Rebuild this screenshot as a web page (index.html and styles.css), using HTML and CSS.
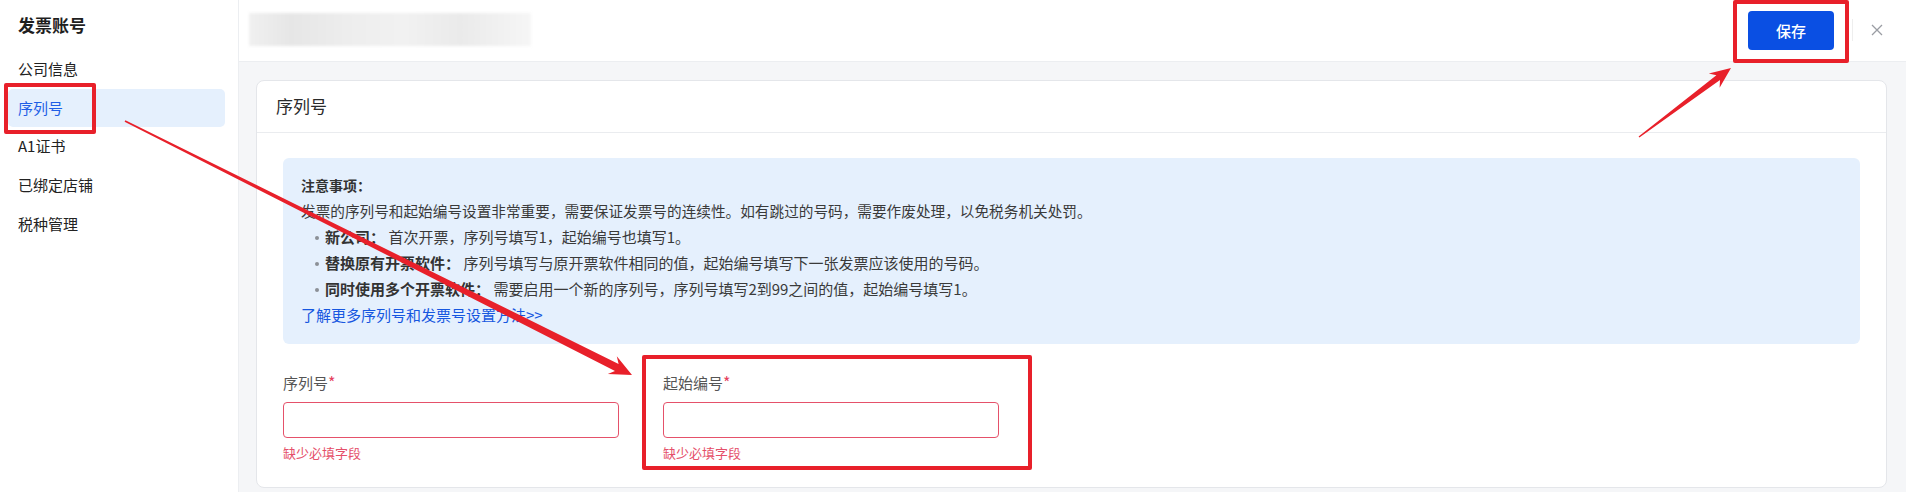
FILE: index.html
```html
<!DOCTYPE html>
<html lang="zh-CN">
<head>
<meta charset="utf-8">
<title>发票账号 - 序列号</title>
<link rel="stylesheet" href="styles.css">
</head>
<body>
<div class="page">
  <aside class="sidebar">
    <div class="side-title">发票账号</div>
    <nav class="side-nav">
      <div class="side-item">公司信息</div>
      <div class="side-item active">序列号</div>
      <div class="side-item">A1证书</div>
      <div class="side-item">已绑定店铺</div>
      <div class="side-item">税种管理</div>
    </nav>
  </aside>
  <main class="main">
    <header class="topbar">
      <div class="blurred"></div>
      <div class="topbar-spacer"></div>
      <button class="btn-save">保存</button>
      <span class="topbar-sep"></span>
      <span class="close">
        <svg width="12" height="12" viewBox="0 0 12 12"><path d="M1 1L11 11M11 1L1 11" stroke="#9a9da3" stroke-width="1.3" fill="none"/></svg>
      </span>
    </header>
    <section class="content">
      <div class="card">
        <div class="card-head">序列号</div>
        <div class="card-body">
          <div class="notice">
            <div class="notice-title">注意事项：</div>
            <div class="notice-line">发票的序列号和起始编号设置非常重要，需要保证发票号的连续性。如有跳过的号码，需要作废处理，以免税务机关处罚。</div>
            <ul class="notice-list">
              <li><span class="dot"></span><b>新公司：</b> 首次开票，序列号填写1，起始编号也填写1。</li>
              <li><span class="dot"></span><b>替换原有开票软件：</b> 序列号填写与原开票软件相同的值，起始编号填写下一张发票应该使用的号码。</li>
              <li><span class="dot"></span><b>同时使用多个开票软件：</b> 需要启用一个新的序列号，序列号填写2到99之间的值，起始编号填写1。</li>
            </ul>
            <a class="notice-link">了解更多序列号和发票号设置方法&gt;&gt;</a>
          </div>
          <div class="form-row">
            <div class="field">
              <label class="field-label">序列号<span class="req">*</span></label>
              <div class="field-input"></div>
              <div class="field-error">缺少必填字段</div>
            </div>
            <div class="field">
              <label class="field-label">起始编号<span class="req">*</span></label>
              <div class="field-input"></div>
              <div class="field-error">缺少必填字段</div>
            </div>
          </div>
        </div>
      </div>
    </section>
  </main>
  <div class="mark mark-side"></div>
  <div class="mark mark-field"></div>
  <div class="mark mark-save"></div>
  <svg class="arrows" width="1906" height="492" viewBox="0 0 1906 492">
    <polygon fill="#e8202a" points="124.6,121.7 615.0,370.9 607.8,374.0 632,375 616.8,356.2 618.6,363.9 125.4,120.3"/>
    <polygon fill="#e8202a" points="1639.4,137.6 1720,80 1719.6,87.8 1731,68 1708.8,73.4 1716.4,75.2 1638.6,136.4"/>
  </svg>
</div>
</body>
</html>
```
FILE: styles.css
```css
* { box-sizing: border-box; }
html, body { margin: 0; padding: 0; }
body {
  width: 1906px;
  height: 492px;
  overflow: hidden;
  font-family: "Noto Sans CJK SC", "Noto Sans", sans-serif;
  color: #333;
  background: #fff;
}
.page {
  position: relative;
  display: flex;
  width: 1906px;
  height: 492px;
}
.sidebar {
  width: 239px;
  flex: none;
  border-right: 1px solid #eceef1;
  background: #fff;
}
.side-title {
  height: 50px;
  line-height: 50px;
  padding-left: 18px;
  font-size: 17px;
  font-weight: 700;
  color: #1f1f1f;
}
.side-nav {
  display: flex;
  flex-direction: column;
}
.side-item {
  height: 38.7px;
  line-height: 38.7px;
  margin: 0 13px 0 8px;
  padding-left: 10px;
  font-size: 15px;
  color: #222;
  border-radius: 5px;
}
.side-item.active {
  background: #e5f0fd;
  color: #1f5fe6;
}
.main {
  flex: 1;
  display: flex;
  flex-direction: column;
  min-width: 0;
  background: #f5f6f8;
}
.topbar {
  height: 62px;
  flex: none;
  display: flex;
  align-items: center;
  padding: 0 23px 0 10px;
  background: #fff;
  border-bottom: 1px solid #eceef1;
}
.blurred {
  width: 282px;
  height: 33px;
  margin-top: -2px;
  background: linear-gradient(90deg, #f0f0f0 0%, #e6e6e6 15%, #ededed 35%, #f1f1f1 55%, #eaeaea 75%, #f6f6f6 100%);
  filter: blur(1.5px);
}
.topbar-spacer { flex: 1; }
.btn-save {
  width: 86px;
  height: 39px;
  margin-top: -1px;
  border: none;
  border-radius: 4px;
  background: #0a4fe3;
  color: #fff;
  font-family: inherit;
  font-size: 15px;
  font-weight: 500;
  padding: 0;
}
.topbar-sep {
  width: 1px;
  height: 22px;
  margin-left: 18px;
  margin-top: -2px;
  background: #eeeeee;
}
.close {
  display: flex;
  margin-left: 18px;
  margin-top: -2px;
}
.content {
  flex: 1;
  padding: 18px 19px 0 17px;
  min-height: 0;
}
.card {
  background: #fff;
  border: 1px solid #e4e6ea;
  border-radius: 8px;
}
.card-head {
  height: 52px;
  line-height: 50px;
  padding-left: 19px;
  font-size: 17px;
  color: #2a2a2a;
  border-bottom: 1px solid #eaecef;
}
.card-body {
  padding: 25px 26px 24px 26px;
}
.notice {
  background: #e5f0fd;
  border-radius: 6px;
  padding: 14px 19px 16px 18px;
  color: #3a3a3a;
  font-size: 15px;
  line-height: 26px;
}
.notice-title {
  font-size: 14px;
  font-weight: 700;
  color: #333;
}
.notice-line {
  font-size: 14.65px;
}
.notice-list {
  list-style: none;
  margin: 0;
  padding: 0 0 0 14px;
}
.dot {
  display: inline-block;
  width: 4px;
  height: 4px;
  border-radius: 50%;
  background: #8c9097;
  margin-right: 6px;
  vertical-align: middle;
  position: relative;
  top: -1px;
}
.notice-list b {
  font-weight: 700;
  color: #333;
}
.notice-link {
  display: block;
  color: #1657e0;
  text-decoration: none;
}
.form-row {
  display: flex;
  gap: 44px;
  margin-top: 27px;
}
.field {
  width: 336px;
  display: flex;
  flex-direction: column;
}
.field-label {
  font-size: 15px;
  line-height: 22px;
  color: #555;
}
.req {
  color: #e5405e;
  font-size: 16px;
}
.field-input {
  height: 36px;
  margin-top: 8px;
  border: 1px solid #e5516a;
  border-radius: 4px;
  background: #fff;
}
.field-error {
  margin-top: 5px;
  font-size: 13px;
  line-height: 20px;
  color: #e5506a;
}
.mark {
  position: absolute;
  border: 4px solid #e8202a;
  border-radius: 2px;
  pointer-events: none;
}
.mark-side { left: 4px; top: 83px; width: 92px; height: 51px; }
.mark-field { left: 642px; top: 355px; width: 390px; height: 115px; }
.mark-save { left: 1733px; top: 0; width: 116px; height: 63px; }
.arrows {
  position: absolute;
  left: 0;
  top: 0;
  pointer-events: none;
}
```
